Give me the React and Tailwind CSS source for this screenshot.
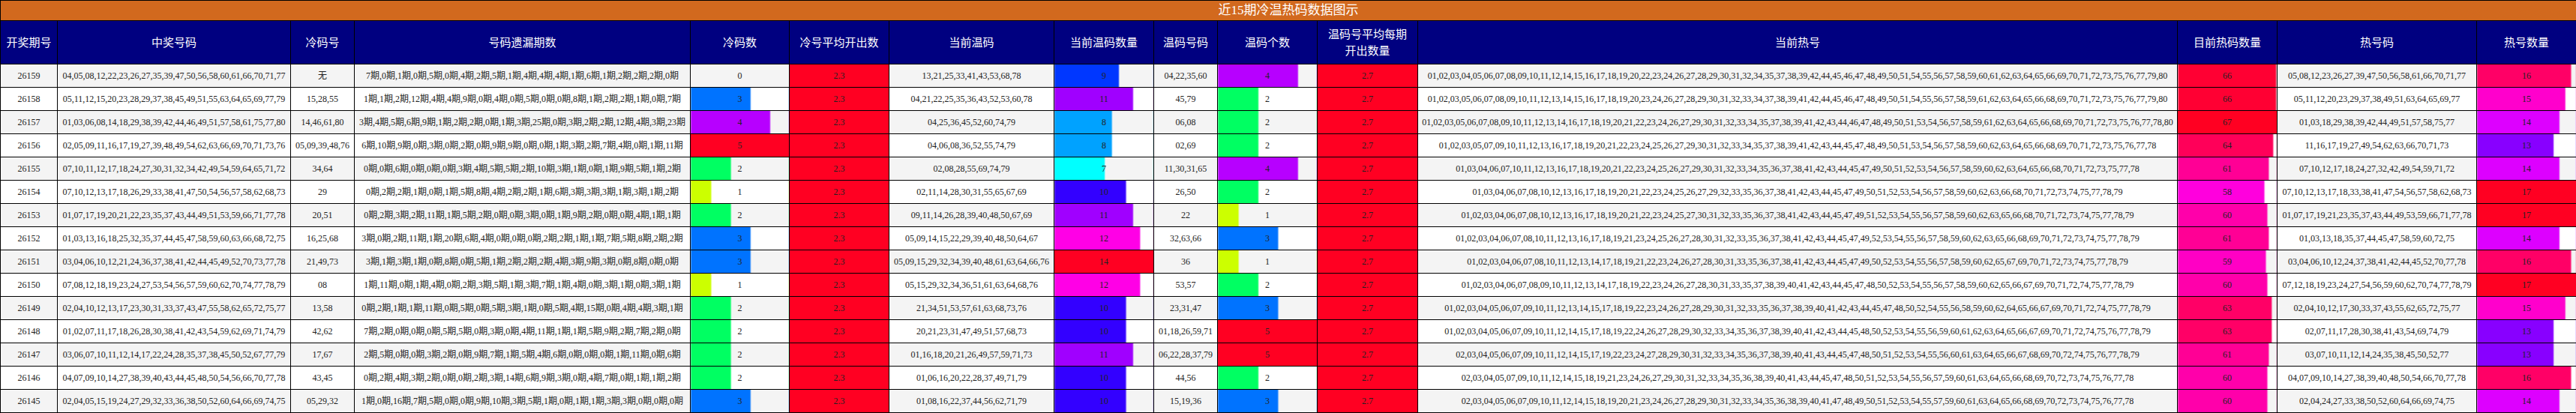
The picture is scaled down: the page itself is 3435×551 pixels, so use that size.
const COLUMN_WIDTHS = [
    "w-[76px]", "w-[311px]", "w-[85px]", "w-[448px]", "w-[132px]", "w-[133px]", "w-[220px]", "w-[133px]",
    "w-[85px]", "w-[133px]", "w-[134px]", "w-[1013px]", "w-[133px]", "w-[266px]", "w-[133px]"
]

const HEADERS = [
    "开奖期号", "中奖号码", "冷码号", "号码遗漏期数", "冷码数", "冷号平均开出数", "当前温码", "当前温码数量",
    "温码号码", "温码个数", ["温码号平均每期", "开出数量"], "当前热号", "目前热码数量", "热号码", "热号数量"
]

const LEVEL_COLORS = { 1: "#ccff00", 2: "#00ff62", 3: "#0073ff", 4: "#b700ff", 5: "#ff0022" }
const WARM_COLORS = { 7: "#00ffff", 8: "#00a2ff", 9: "#0037ff", 10: "#3300ff", 11: "#a000ff", 12: "#ff00e6", 14: "#ff0022" }
const HOT_COLORS = { 58: "#ff00dd", 59: "#ff00c4", 60: "#ff00aa", 61: "#ff0095", 63: "#ff0066", 64: "#ff0059", 66: "#ff0033", 67: "#ff0022" }
const HOT_COUNT_COLORS = { 13: "#8800ff", 14: "#dd00ff", 15: "#ff00cc", 16: "#ff0066", 17: "#ff0022" }

const ROWS = [
    {
        issue: "26159",
        winners: "04,05,08,12,22,23,26,27,35,39,47,50,56,58,60,61,66,70,71,77",
        cold: "无", coldCount: 0,
        missed: "7期,0期,1期,0期,5期,0期,4期,2期,5期,1期,4期,4期,4期,1期,6期,1期,2期,2期,2期,0期",
        warm: "13,21,25,33,41,43,53,68,78", warmCount: 9,
        warmNums: "04,22,35,60", warmNumCount: 4,
        hot: "01,02,03,04,05,06,07,08,09,10,11,12,14,15,16,17,18,19,20,22,23,24,26,27,28,29,30,31,32,34,35,37,38,39,42,44,45,46,47,48,49,50,51,54,55,56,57,58,59,60,61,62,63,64,65,66,69,70,71,72,73,75,76,77,79,80",
        hotCount: 66,
        hotNums: "05,08,12,23,26,27,39,47,50,56,58,61,66,70,71,77", hotNumCount: 16
    },
    {
        issue: "26158",
        winners: "05,11,12,15,20,23,28,29,37,38,45,49,51,55,63,64,65,69,77,79",
        cold: "15,28,55", coldCount: 3,
        missed: "1期,1期,2期,12期,4期,4期,9期,0期,4期,0期,5期,0期,0期,8期,1期,2期,2期,1期,0期,7期",
        warm: "04,21,22,25,35,36,43,52,53,60,78", warmCount: 11,
        warmNums: "45,79", warmNumCount: 2,
        hot: "01,02,03,05,06,07,08,09,10,11,12,13,14,15,16,17,18,19,20,23,24,26,27,28,29,30,31,32,33,34,37,38,39,41,42,44,45,46,47,48,49,50,51,54,55,56,57,58,59,61,62,63,64,65,66,68,69,70,71,72,73,75,76,77,79,80",
        hotCount: 66,
        hotNums: "05,11,12,20,23,29,37,38,49,51,63,64,65,69,77", hotNumCount: 15
    },
    {
        issue: "26157",
        winners: "01,03,06,08,14,18,29,38,39,42,44,46,49,51,57,58,61,75,77,80",
        cold: "14,46,61,80", coldCount: 4,
        missed: "3期,4期,5期,6期,9期,1期,2期,2期,0期,1期,3期,25期,0期,3期,2期,2期,12期,4期,3期,23期",
        warm: "04,25,36,45,52,60,74,79", warmCount: 8,
        warmNums: "06,08", warmNumCount: 2,
        hot: "01,02,03,05,06,07,08,09,10,11,12,13,14,16,17,18,19,20,21,22,23,24,26,27,29,30,31,32,33,34,35,37,38,39,41,42,43,44,46,47,48,49,50,51,53,54,56,57,58,59,61,62,63,64,65,66,68,69,70,71,72,73,75,76,77,78,80",
        hotCount: 67,
        hotNums: "01,03,18,29,38,39,42,44,49,51,57,58,75,77", hotNumCount: 14
    },
    {
        issue: "26156",
        winners: "02,05,09,11,16,17,19,27,39,48,49,54,62,63,66,69,70,71,73,76",
        cold: "05,09,39,48,76", coldCount: 5,
        missed: "6期,10期,9期,0期,3期,0期,2期,0期,9期,9期,0期,0期,1期,3期,2期,7期,4期,0期,1期,11期",
        warm: "04,06,08,36,52,55,74,79", warmCount: 8,
        warmNums: "02,69", warmNumCount: 2,
        hot: "01,02,03,05,07,09,10,11,12,13,16,17,18,19,20,21,22,23,24,25,26,27,29,30,31,32,33,34,35,37,38,39,41,42,43,44,45,47,48,49,50,51,53,54,56,57,58,59,60,62,63,64,65,66,68,69,70,71,72,73,75,76,77,78",
        hotCount: 64,
        hotNums: "11,16,17,19,27,49,54,62,63,66,70,71,73", hotNumCount: 13
    },
    {
        issue: "26155",
        winners: "07,10,11,12,17,18,24,27,30,31,32,34,42,49,54,59,64,65,71,72",
        cold: "34,64", coldCount: 2,
        missed: "0期,0期,6期,0期,0期,0期,3期,4期,5期,5期,2期,10期,3期,1期,0期,1期,9期,5期,1期,2期",
        warm: "02,08,28,55,69,74,79", warmCount: 7,
        warmNums: "11,30,31,65", warmNumCount: 4,
        hot: "01,03,04,06,07,10,11,12,13,16,17,18,19,20,21,22,23,24,25,26,27,29,30,31,32,33,34,35,36,37,38,41,42,43,44,45,47,49,50,51,52,53,54,56,57,58,59,60,62,63,64,65,66,68,70,71,72,73,75,77,78",
        hotCount: 61,
        hotNums: "07,10,12,17,18,24,27,32,42,49,54,59,71,72", hotNumCount: 14
    },
    {
        issue: "26154",
        winners: "07,10,12,13,17,18,26,29,33,38,41,47,50,54,56,57,58,62,68,73",
        cold: "29", coldCount: 1,
        missed: "0期,2期,2期,1期,0期,1期,5期,8期,4期,2期,2期,1期,6期,3期,3期,3期,1期,3期,1期,2期",
        warm: "02,11,14,28,30,31,55,65,67,69", warmCount: 10,
        warmNums: "26,50", warmNumCount: 2,
        hot: "01,03,04,06,07,08,10,12,13,16,17,18,19,20,21,22,23,24,25,26,27,29,32,33,35,36,37,38,41,42,43,44,45,47,49,50,51,52,53,54,56,57,58,59,60,62,63,66,68,70,71,72,73,74,75,77,78,79",
        hotCount: 58,
        hotNums: "07,10,12,13,17,18,33,38,41,47,54,56,57,58,62,68,73", hotNumCount: 17
    },
    {
        issue: "26153",
        winners: "01,07,17,19,20,21,22,23,35,37,43,44,49,51,53,59,66,71,77,78",
        cold: "20,51", coldCount: 2,
        missed: "0期,2期,3期,2期,11期,1期,5期,2期,0期,0期,3期,0期,1期,9期,2期,0期,0期,4期,1期,1期",
        warm: "09,11,14,26,28,39,40,48,50,67,69", warmCount: 11,
        warmNums: "22", warmNumCount: 1,
        hot: "01,02,03,04,06,07,08,10,12,13,16,17,18,19,20,21,22,23,24,25,27,30,31,32,33,35,36,37,38,41,42,43,44,45,47,49,51,52,53,54,55,56,57,58,59,60,62,63,65,66,68,70,71,72,73,74,75,77,78,79",
        hotCount: 60,
        hotNums: "01,07,17,19,21,23,35,37,43,44,49,53,59,66,71,77,78", hotNumCount: 17
    },
    {
        issue: "26152",
        winners: "01,03,13,16,18,25,32,35,37,44,45,47,58,59,60,63,66,68,72,75",
        cold: "16,25,68", coldCount: 3,
        missed: "3期,0期,2期,11期,1期,20期,6期,4期,0期,0期,0期,2期,2期,1期,1期,7期,5期,8期,2期,2期",
        warm: "05,09,14,15,22,29,39,40,48,50,64,67", warmCount: 12,
        warmNums: "32,63,66", warmNumCount: 3,
        hot: "01,02,03,04,06,07,08,10,11,12,13,16,17,18,19,21,23,24,25,26,27,28,30,31,32,33,35,36,37,38,41,42,43,44,45,47,49,52,53,54,55,56,57,58,59,60,62,63,65,66,68,69,70,71,72,73,74,75,77,78,79",
        hotCount: 61,
        hotNums: "01,03,13,18,35,37,44,45,47,58,59,60,72,75", hotNumCount: 14
    },
    {
        issue: "26151",
        winners: "03,04,06,10,12,21,24,36,37,38,41,42,44,45,49,52,70,73,77,78",
        cold: "21,49,73", coldCount: 3,
        missed: "3期,1期,3期,1期,0期,8期,0期,5期,1期,2期,2期,2期,4期,3期,9期,3期,0期,8期,0期,0期",
        warm: "05,09,15,29,32,34,39,40,48,61,63,64,66,76", warmCount: 14,
        warmNums: "36", warmNumCount: 1,
        hot: "01,02,03,04,06,07,08,10,11,12,13,14,17,18,19,21,22,23,24,26,27,28,30,31,33,35,36,37,38,41,42,43,44,45,47,49,50,52,53,54,55,56,57,58,59,60,62,65,67,69,70,71,72,73,74,75,77,78,79",
        hotCount: 59,
        hotNums: "03,04,06,10,12,24,37,38,41,42,44,45,52,70,77,78", hotNumCount: 16
    },
    {
        issue: "26150",
        winners: "07,08,12,18,19,23,24,27,53,54,56,57,59,60,62,70,74,77,78,79",
        cold: "08", coldCount: 1,
        missed: "1期,11期,0期,1期,4期,0期,2期,3期,5期,1期,3期,7期,1期,4期,0期,3期,1期,0期,3期,1期",
        warm: "05,15,29,32,34,36,51,61,63,64,68,76", warmCount: 12,
        warmNums: "53,57", warmNumCount: 2,
        hot: "01,02,03,04,06,07,08,09,10,11,12,13,14,17,18,19,22,23,24,26,27,28,30,31,33,35,37,38,39,40,41,42,43,44,45,47,48,50,52,53,54,55,56,57,58,59,60,62,65,66,67,69,70,71,72,74,75,77,78,79",
        hotCount: 60,
        hotNums: "07,12,18,19,23,24,27,54,56,59,60,62,70,74,77,78,79", hotNumCount: 17
    },
    {
        issue: "26149",
        winners: "02,04,10,12,13,17,23,30,31,33,37,43,47,55,58,62,65,72,75,77",
        cold: "13,58", coldCount: 2,
        missed: "0期,2期,1期,1期,11期,0期,5期,0期,5期,3期,1期,0期,5期,4期,15期,0期,4期,4期,3期,1期",
        warm: "21,34,51,53,57,61,63,68,73,76", warmCount: 10,
        warmNums: "23,31,47", warmNumCount: 3,
        hot: "01,02,03,04,05,06,07,09,10,11,12,13,14,15,17,18,19,22,23,24,26,27,28,29,30,31,32,33,35,36,37,38,39,40,41,42,43,44,45,47,48,50,52,54,55,56,58,59,60,62,64,65,66,67,69,70,71,72,74,75,77,78,79",
        hotCount: 63,
        hotNums: "02,04,10,12,17,30,33,37,43,55,62,65,72,75,77", hotNumCount: 15
    },
    {
        issue: "26148",
        winners: "01,02,07,11,17,18,26,28,30,38,41,42,43,54,59,62,69,71,74,79",
        cold: "42,62", coldCount: 2,
        missed: "7期,2期,0期,0期,0期,5期,5期,0期,3期,0期,4期,11期,1期,1期,5期,9期,2期,7期,2期,0期",
        warm: "20,21,23,31,47,49,51,57,68,73", warmCount: 10,
        warmNums: "01,18,26,59,71", warmNumCount: 5,
        hot: "01,02,03,04,05,06,07,09,10,11,12,14,15,17,18,19,22,24,26,27,28,29,30,32,33,34,35,36,37,38,39,40,41,42,43,44,45,48,50,52,53,54,55,56,59,60,61,62,63,64,65,66,67,69,70,71,72,74,75,76,77,78,79",
        hotCount: 63,
        hotNums: "02,07,11,17,28,30,38,41,43,54,69,74,79", hotNumCount: 13
    },
    {
        issue: "26147",
        winners: "03,06,07,10,11,12,14,17,22,24,28,35,37,38,45,50,52,67,77,79",
        cold: "17,67", coldCount: 2,
        missed: "2期,5期,0期,0期,3期,2期,0期,9期,7期,1期,5期,4期,6期,0期,0期,0期,1期,11期,0期,6期",
        warm: "01,16,18,20,21,26,49,57,59,71,73", warmCount: 11,
        warmNums: "06,22,28,37,79", warmNumCount: 5,
        hot: "02,03,04,05,06,07,09,10,11,12,14,15,17,19,22,23,24,27,28,29,30,31,32,33,34,35,36,37,38,39,40,41,43,44,45,47,48,50,51,52,53,54,55,56,60,61,63,64,65,66,67,68,69,70,72,74,75,76,77,78,79",
        hotCount: 61,
        hotNums: "03,07,10,11,12,14,24,35,38,45,50,52,77", hotNumCount: 13
    },
    {
        issue: "26146",
        winners: "04,07,09,10,14,27,38,39,40,43,44,45,48,50,54,56,66,70,77,78",
        cold: "43,45", coldCount: 2,
        missed: "0期,2期,4期,3期,2期,0期,0期,2期,3期,14期,6期,9期,3期,0期,4期,7期,0期,1期,1期,2期",
        warm: "01,06,16,20,22,28,37,49,71,79", warmCount: 10,
        warmNums: "44,56", warmNumCount: 2,
        hot: "02,03,04,05,07,09,10,11,12,14,15,18,19,21,23,24,26,27,29,30,31,32,33,34,35,36,38,39,40,41,43,44,45,47,48,50,51,52,53,54,55,56,57,59,60,61,63,64,65,66,68,69,70,72,73,74,75,76,77,78",
        hotCount: 60,
        hotNums: "04,07,09,10,14,27,38,39,40,48,50,54,66,70,77,78", hotNumCount: 16
    },
    {
        issue: "26145",
        winners: "02,04,05,15,19,24,27,29,32,33,36,38,50,52,60,64,66,69,74,75",
        cold: "05,29,32", coldCount: 3,
        missed: "1期,0期,16期,7期,5期,0期,0期,9期,10期,3期,5期,1期,0期,1期,1期,3期,3期,0期,0期,0期",
        warm: "01,08,16,22,37,44,56,62,71,79", warmCount: 10,
        warmNums: "15,19,36", warmNumCount: 3,
        hot: "02,03,04,05,06,07,09,10,11,12,14,15,18,19,20,21,23,24,26,27,28,29,30,31,32,33,34,35,36,38,39,40,41,47,48,49,50,51,52,53,54,55,57,59,60,61,63,64,65,66,68,69,70,72,73,74,75,76,77,78",
        hotCount: 60,
        hotNums: "02,04,24,27,33,38,50,52,60,64,66,69,74,75", hotNumCount: 14
    }
]

const CELL = "border border-black text-center whitespace-nowrap p-0"

function BarCell({ value, max, colors }) {
    const percent = (value / max) * 100
    const color = colors[value]
    // the bar is drawn as the cell's background, with the thin tinted edge the chart leaves on the right
    const background = value === 0 ? undefined : `linear-gradient(to right, ${color} ${percent}%, transparent calc(${percent}% + 1.5px), transparent calc(100% - 1.5px), ${color}80 100%)`
    return <td className={CELL} style={{ background }}>{value}</td>
}

function ColdAverageCell({ value }) {
    return <td className={`${CELL} bg-[#ff0022]`}>{value}</td>
}

export default function App() {
    return (
        <table className="table-fixed border-collapse w-[3435px] text-[12px] text-[#222] font-['Liberation_Serif','Noto_Sans_CJK_SC',sans-serif]">
            <colgroup>
                {COLUMN_WIDTHS.map((width, i) => <col key={i} className={width} />)}
            </colgroup>
            <thead>
                <tr className="h-[27px]">
                    <th colSpan={15} className={`${CELL} bg-[#d2691e] text-white text-[17px] font-normal`}>
                        近15期冷温热码数据图示
                    </th>
                </tr>
                <tr className="h-[58px]">
                    {HEADERS.map((header, i) => (
                        <th key={i} className={`${CELL} bg-[#000080] text-white text-[15px] leading-[22px] font-normal`}>
                            {Array.isArray(header) ? <>{header[0]}<br />{header[1]}</> : header}
                        </th>
                    ))}
                </tr>
            </thead>
            <tbody>
                {ROWS.map((row, i) => (
                    <tr key={row.issue} className={i % 2 === 0 ? "h-[31px] bg-[#f4f4f4]" : "h-[31px] bg-white"}>
                        <td className={CELL}>{row.issue}</td>
                        <td className={CELL}>{row.winners}</td>
                        <td className={CELL}>{row.cold}</td>
                        <td className={CELL}>{row.missed}</td>
                        <BarCell value={row.coldCount} max={5} colors={LEVEL_COLORS} />
                        <ColdAverageCell value="2.3" />
                        <td className={CELL}>{row.warm}</td>
                        <BarCell value={row.warmCount} max={14} colors={WARM_COLORS} />
                        <td className={CELL}>{row.warmNums}</td>
                        <BarCell value={row.warmNumCount} max={5} colors={LEVEL_COLORS} />
                        <ColdAverageCell value="2.7" />
                        <td className={CELL}>{row.hot}</td>
                        <BarCell value={row.hotCount} max={67} colors={HOT_COLORS} />
                        <td className={CELL}>{row.hotNums}</td>
                        <BarCell value={row.hotNumCount} max={17} colors={HOT_COUNT_COLORS} />
                    </tr>
                ))}
            </tbody>
        </table>
    )
}
